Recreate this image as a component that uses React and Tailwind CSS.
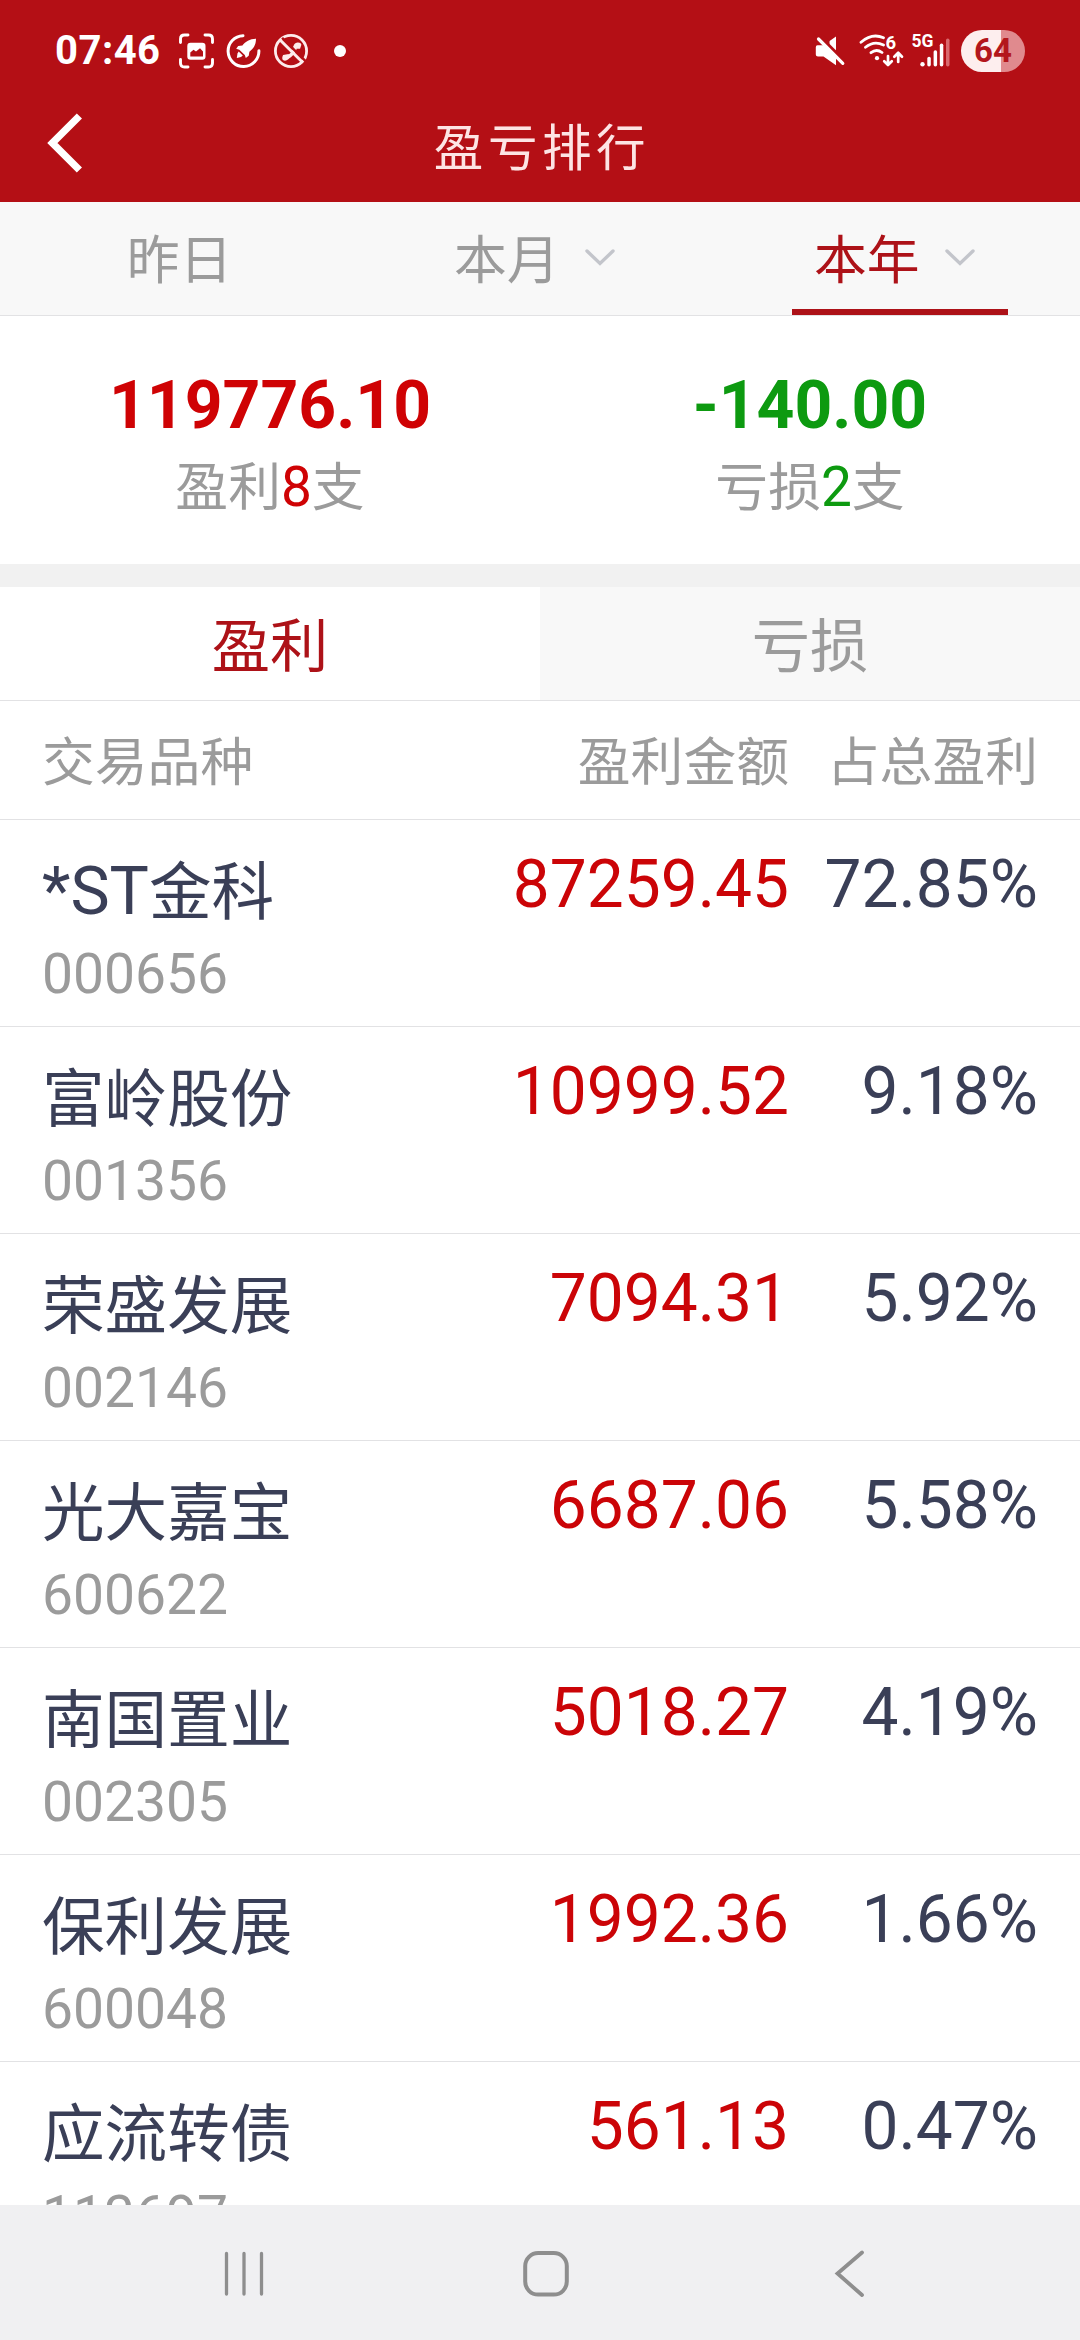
import React from "react";

const rows = [
  { latin: "*ST", name: "金科", code: "000656", amount: "87259.45", share: "72.85%" },
  { name: "富岭股份", code: "001356", amount: "10999.52", share: "9.18%" },
  { name: "荣盛发展", code: "002146", amount: "7094.31", share: "5.92%" },
  { name: "光大嘉宝", code: "600622", amount: "6687.06", share: "5.58%" },
  { name: "南国置业", code: "002305", amount: "5018.27", share: "4.19%" },
  { name: "保利发展", code: "600048", amount: "1992.36", share: "1.66%" },
  { name: "应流转债", code: "113697", amount: "561.13", share: "0.47%" },
];

function StatusBar() {
  return (
    <div className="flex h-[102px] items-center pl-[55px] pr-[55px] text-white">
      <span className="w-[106px] whitespace-nowrap font-['Roboto',sans-serif] text-[40px] leading-[102px] font-bold tracking-[0.5px]">
        07:46
      </span>
      <svg className="ml-[17px] h-[38px] w-[38px] shrink-0" viewBox="178 32.5 38 38" fill="none">
        <path
          d="M180.500 43V39.500Q180.500 35.500 184.500 35.500H188M205 35.500H208.500Q212.500 35.500 212.500 39.500V43M212.500 60V63.500Q212.500 67.500 208.500 67.500H205M188 67.500H184.500Q180.500 67.500 180.500 63.500V60"
          stroke="#fff"
          strokeWidth="2.9"
          strokeLinecap="round"
        />
        <rect x="187.300" y="43.200" width="18.200" height="17" rx="3.200" fill="#fff" />
        <path d="M190.300 57V53L193.500 50.300L196 52L200 48.800L203 52V57Z" fill="#b40f15" />
      </svg>
      <svg className="ml-[9px] h-[38px] w-[38px] shrink-0" viewBox="225 32.5 38 38" fill="none">
        <path d="M243 36.200A15.400 15.400 0 1 0 258.900 51.200" stroke="#fff" strokeWidth="3" strokeLinecap="round" />
        <path
          d="M256 39.200C249.500 39.300 245.600 42 242.400 46L238.200 46.600L236.200 49.300L239.300 50.200L244.800 55.400L245.800 58.600L248.700 56.300L249.400 52.300C253.400 49 256 45.400 256 39.200Z"
          fill="#fff"
        />
        <path d="M238.700 52L242.800 56L241 57.500L236.800 58.400L237.500 54Z" fill="#fff" />
      </svg>
      <svg className="ml-[9px] h-[38px] w-[38px] shrink-0" viewBox="271.5 32.5 38 38" fill="none">
        <circle cx="290.500" cy="51.500" r="15.600" stroke="#fdecec" strokeWidth="2.8" />
        <path d="M286.300 58.300C291.500 55.500 294.500 52 294.800 46.500" stroke="#fdecec" strokeWidth="3.600" />
        <path d="M293 47.500Q293 43.500 297 43Q301 42.800 300.800 45.600L299.600 49.200L294.600 49.200Z" fill="#fdecec" />
        <path d="M288.300 54.500L288 59.600Q285 62.400 282.400 60.600Q281 59 282.600 55.600Z" fill="#fdecec" />
        <path d="M281.600 38.300L305 61.700" stroke="#b40f15" strokeWidth="2.600" />
        <path d="M279.600 40.500L302 62.800" stroke="#fdecec" strokeWidth="3" />
      </svg>
      <span className="ml-[23.5px] h-3 w-3 rounded-full bg-white" />

      <svg className="ml-auto h-[34px] w-[32px] shrink-0" viewBox="813.5 34 32 34" fill="none">
        <path
          d="M817 45.300H823L835.500 36.600V65.200L823 56.600H817.500Q815.300 56.600 815.300 54.600V47.200Q815.300 45.300 817 45.300Z"
          fill="#fff"
        />
        <path d="M818 35.500L845 62.300" stroke="#b40f15" strokeWidth="3.600" />
        <path d="M813 34.500H822L829 41V45L826 44.500L817 38Z" fill="#b40f15" />
        <path d="M818 39L842.300 63.400" stroke="#fff" strokeWidth="3.200" strokeLinecap="round" />
      </svg>
      <svg className="ml-[12.500px] h-[38px] w-[46px] shrink-0" viewBox="858 32.5 46 38" fill="none">
        <path
          d="M861 42.800Q872 33.200 883.500 38.300M865.500 47.800Q874 40.700 883.500 45.500M871 53.200Q876.500 48.800 882 53"
          stroke="#fff"
          strokeWidth="2.800"
          strokeLinecap="round"
        />
        <circle cx="877" cy="58.700" r="2.100" fill="#fff" />
        <path
          d="M888 56.500V65M884.200 61.800L888 65.500L891.800 61.800M898.200 62.500V53.500M894.300 57.200L898.200 53.300L902 57.200"
          stroke="#fff"
          strokeWidth="2.700"
          strokeLinecap="round"
          strokeLinejoin="round"
        />
        <text x="885.500" y="49.200" fill="#fff" fontSize="18.500" fontWeight="700" fontFamily="Roboto, sans-serif">6</text>
      </svg>
      <svg className="ml-[7px] h-[38px] w-[40px] shrink-0" viewBox="911 32.5 40 38" fill="none">
        <text x="911.400" y="47.400" fill="#fff" fontSize="17.500" fontWeight="700" fontFamily="Roboto, sans-serif">5G</text>
        <circle cx="922.500" cy="64.800" r="2.200" fill="#fff" />
        <rect x="927.300" y="57.300" width="3.500" height="9.700" rx="1.700" fill="#fff" />
        <rect x="933.600" y="50.700" width="3.500" height="16.300" rx="1.700" fill="#fff" />
        <rect x="939.800" y="44" width="3.500" height="23" rx="1.700" fill="#fff" />
        <rect x="946" y="39" width="3.500" height="28" rx="1.700" fill="#d9696e" />
      </svg>
      <div className="ml-[10px] flex h-[42px] w-16 shrink-0 items-center justify-center rounded-full bg-linear-to-r from-[#fdeeee] from-[63%] to-[#e08a8e] to-[63%]">
        <span className="font-['Roboto',sans-serif] text-[33px] leading-[42px] font-bold text-[#b3161c]">64</span>
      </div>
    </div>
  );
}

function TitleBar() {
  return (
    <div className="grid h-[100px] grid-cols-[200px_1fr_200px]">
      <svg className="mt-[8px] ml-[44px] h-[64px] w-[42px]" viewBox="44 110 42 64" fill="none">
        <path d="M79.400 116L52.400 143L79.400 170" stroke="#fff" strokeWidth="7.300" />
      </svg>
      <h1 className="pl-1 text-center text-[49.5px] leading-[94px] font-normal tracking-[4.6px] text-[#fde4e4]">
        盈亏排行
      </h1>
    </div>
  );
}

function Caret() {
  return (
    <svg className="mb-1 ml-[24.500px] h-5 w-8" viewBox="0 0 32 20" fill="none">
      <path d="M3 4L16 16.500L29 4" stroke="#c3c5cb" strokeWidth="3.400" strokeLinecap="round" />
    </svg>
  );
}

function PeriodTabs() {
  return (
    <div className="flex h-[114px] shrink-0 border-b border-[#e2e2e4] bg-[#f8f8f8] text-[52.8px] text-[#9b9b9b]">
      <div className="w-[360px] pr-[1px] text-center leading-[119px]">昨日</div>
      <div className="flex w-[360px] items-center pl-[94px]">
        <span className="pt-[6px] leading-[107px]">本月</span>
        <Caret />
      </div>
      <div className="relative flex w-[360px] items-center pl-[94px] text-[#ad1218]">
        <span className="pt-[6px] leading-[107px]">本年</span>
        <Caret />
        <span className="absolute bottom-0 left-[72px] h-[6px] w-[216px] bg-[#ad1218]" />
      </div>
    </div>
  );
}

function Total({ value, label, count, color }) {
  return (
    <div className="flex flex-1 flex-col items-center pt-[50px]">
      <div className={"h-[80px] text-[66px] leading-[80px] font-bold " + color}>{value}</div>
      <div className="mt-[4px] h-[76px] text-[52.8px] leading-[76px] text-[#9b9b9b]">
        {label}
        <span className={"text-[55px] leading-none " + color}>{count}</span>支
      </div>
    </div>
  );
}

function Row({ latin, name, code, amount, share }) {
  return (
    <div className="flex h-[207px] shrink-0 border-b border-[#e2e2e4] pr-[42px] pl-[42px] pt-[26px] text-[#3a3f57]">
      <div className="w-[400px] pt-[9px]">
        <div className="h-[76px] text-[62.6px] leading-[76px]">
          {latin && <span className="text-[66px] leading-none">{latin}</span>}
          {name}
        </div>
        <div className="mt-[8px] h-[70px] text-[55.2px] leading-[70px] text-[#9b9b9b]">{code}</div>
      </div>
      <div className="w-[347px] text-right text-[65.8px] leading-[77px] text-[#cb0407]">{amount}</div>
      <div className="flex-1 text-right text-[65.8px] leading-[77px]">{share}</div>
    </div>
  );
}

function NavBar() {
  return (
    <div className="flex h-[135px] shrink-0 items-center bg-[#f0f0f2] pl-[220px]">
      <svg className="h-12 w-12" viewBox="0 0 48 48" fill="none">
        <path d="M6.500 4.500V45M24 4.500V45M41.500 4.500V45" stroke="#8e8e8e" strokeWidth="3.300" strokeLinecap="round" />
      </svg>
      <svg className="ml-[254px] h-12 w-12" viewBox="0 0 48 48" fill="none">
        <rect x="3.200" y="4" width="41.600" height="41.600" rx="13" stroke="#8e8e8e" strokeWidth="4" />
      </svg>
      <svg className="ml-[258px] h-12 w-12" viewBox="0 0 48 48" fill="none">
        <path d="M34 3.500L9.500 24.500L34 46" stroke="#8e8e8e" strokeWidth="3.800" strokeLinecap="round" />
      </svg>
    </div>
  );
}

export default function App() {
  return (
    <div className="flex h-[2340px] w-[1080px] flex-col overflow-hidden bg-white font-['Roboto','Noto_Sans_CJK_SC',sans-serif]">
      <header className="h-[202px] shrink-0 bg-[#b40f15]">
        <StatusBar />
        <TitleBar />
      </header>
      <PeriodTabs />
      <section className="flex h-[248px] shrink-0">
        <Total value="119776.10" label="盈利" count="8" color="text-[#cf0204]" />
        <Total value="-140.00" label="亏损" count="2" color="text-[#0d9a10]" />
      </section>
      <div className="h-[23px] shrink-0 bg-[#f1f1f1]" />
      <div className="flex h-[114px] shrink-0 border-b border-[#e2e2e4] text-center text-[58.3px] leading-[120px]">
        <div className="flex-1 text-[#ad1218]">盈利</div>
        <div className="flex-1 bg-[#f8f8f8] text-[#9b9b9b]">亏损</div>
      </div>
      <div className="flex h-[119px] shrink-0 border-b border-[#e2e2e4] px-[42px] text-[52.8px] leading-[124px] text-[#9b9b9b]">
        <div className="w-[400px]">交易品种</div>
        <div className="w-[347px] text-right">盈利金额</div>
        <div className="flex-1 text-right">占总盈利</div>
      </div>
      <main className="min-h-0 flex-1 overflow-hidden">
        {rows.map((row) => (
          <Row key={row.code} {...row} />
        ))}
      </main>
      <NavBar />
    </div>
  );
}
